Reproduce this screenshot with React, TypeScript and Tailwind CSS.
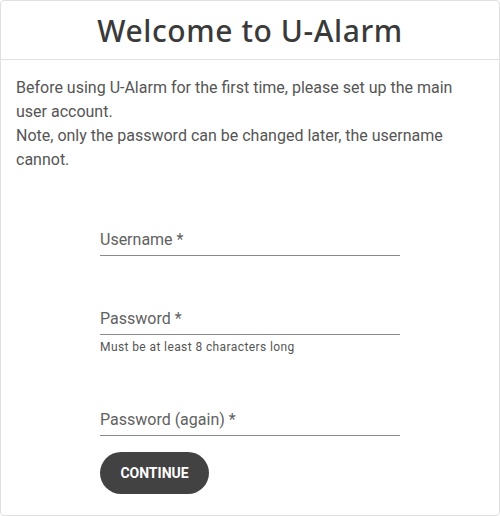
import React from 'react';

function Field({ label, helper }: { label: string; helper?: string }) {
  return (
    <div className="flex flex-col">
      <label className="text-[16px] leading-[24px] text-[#616161] pb-[3px] border-b border-[#8a8a8a]">{label}</label>
      {helper && <span className="text-[12px] leading-[16px] text-[#555] mt-[4px] tracking-[0.4px]">{helper}</span>}
    </div>
  );
}

export default function App() {
  return (
    <div className="w-[500px] h-[516px] bg-white font-['Roboto',sans-serif]">
      <div className="h-full border border-[#e0e0e0] rounded-[4px] flex flex-col">
        {/* Header */}
        <div className="h-[59px] border-b border-[#e0e0e0] flex items-center justify-center">
          <h1 className="text-[30px] font-medium text-[#3a3a3a] tracking-[0.6px] font-['Noto_Sans',sans-serif]">Welcome to U-Alarm</h1>
        </div>

        <div className="px-[15px] pt-[16px] text-[16px] leading-[24px] text-[#555]">
          <p>Before using U-Alarm for the first time, please set up the main user account.</p>
          <p>Note, only the password can be changed later, the username cannot.</p>
        </div>

        <div className="w-[300px] ml-[99px] mt-[56px] flex flex-col">
          <Field label="Username *" />
          <div className="mt-[51px]"><Field label="Password *" helper="Must be at least 8 characters long" /></div>
          <div className="mt-[53px]"><Field label="Password (again) *" /></div>
          <button className="mt-[16px] w-[109px] h-[42px] rounded-full bg-[#424242] text-white text-[14px] font-bold">CONTINUE</button>
        </div>
      </div>
    </div>
  );
}
